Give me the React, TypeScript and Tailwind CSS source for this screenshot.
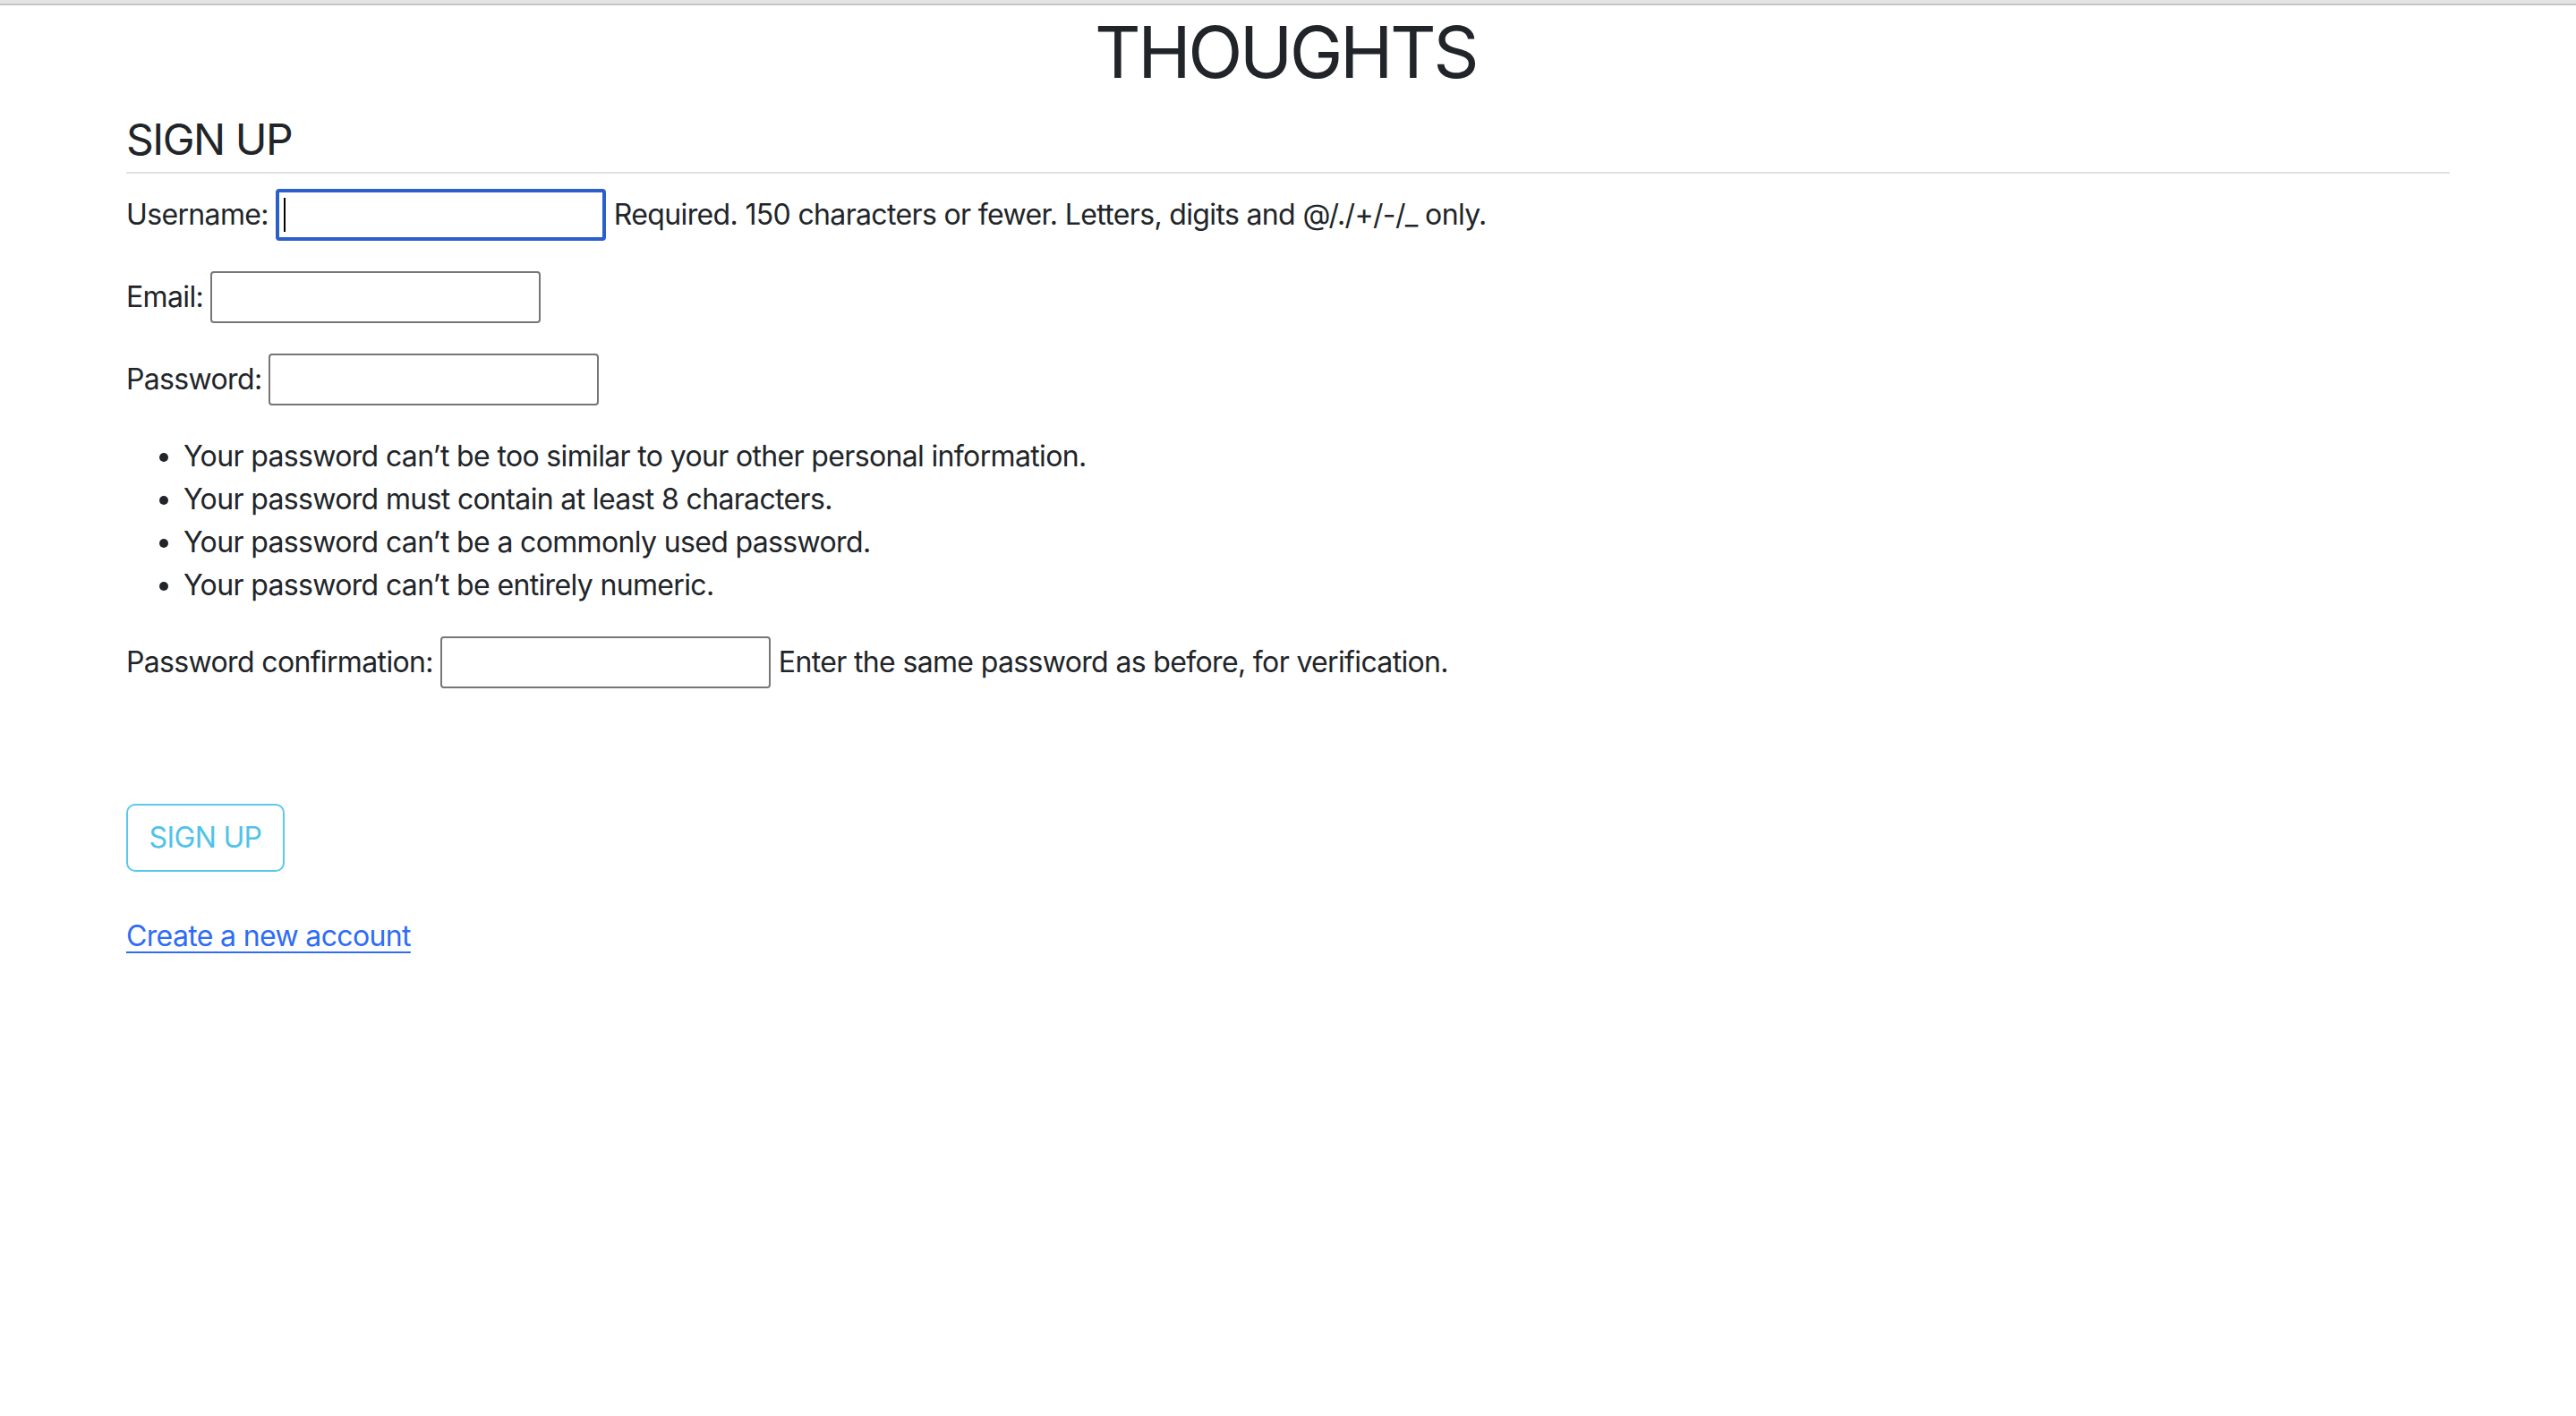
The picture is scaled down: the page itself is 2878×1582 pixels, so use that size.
const rules = [
  "Your password can’t be too similar to your other personal information.",
  "Your password must contain at least 8 characters.",
  "Your password can’t be a commonly used password.",
  "Your password can’t be entirely numeric.",
];

const Field = ({
  label,
  type,
  help,
  focused,
}: {
  label: string;
  type: string;
  help?: string;
  focused?: boolean;
}) => (
  <div className="flex items-center h-[60px] mb-[32px]">
    <label>{label}</label>
    <div
      className={`relative ml-[8px] w-[369px] h-[58px] rounded-[4px] bg-white ${
        focused
          ? "border-[4px] border-[#2b5fcb]"
          : "border-[2px] border-[#767676]"
      }`}
    >
      <input
        type={type}
        className="w-full h-full bg-transparent outline-none px-[4px]"
      />
      {focused && (
        <span className="absolute left-[5px] top-[6px] w-[2px] h-[38px] bg-black" />
      )}
    </div>
    {help && <span className="ml-[9px]">{help}</span>}
  </div>
);

export default function App() {
  return (
    <div
      className="min-h-screen bg-white text-[#212529] text-[32px] leading-[48px] tracking-[-0.65px]"
      style={{ fontFamily: "Inter, 'Noto Sans', sans-serif" }}
    >
      <div className="h-[4px] bg-[#e4e4e4]" />
      <div className="h-[2px] bg-[#c4c4c4]" />
      <h1 className="mt-[4px] pr-[6px] text-center text-[80px] leading-[96px] font-normal tracking-[-3.5px]">
        THOUGHTS
      </h1>
      <div className="px-[141px]">
        <h2 className="mt-[21px] text-[48px] leading-[58px] pb-[7px] border-b-2 border-[#dee2e6] mb-[16px] tracking-[-1.5px]">
          SIGN UP
        </h2>
        <form onSubmit={(e) => e.preventDefault()}>
          <Field
            label="Username:"
            type="text"
            focused
            help="Required. 150 characters or fewer. Letters, digits and @/./+/-/_ only."
          />
          <Field label="Email:" type="email" />
          <Field label="Password:" type="password" />
          <ul className="list-disc pl-[64px] mb-[32px]">
            {rules.map((r) => (
              <li key={r}>{r}</li>
            ))}
          </ul>
          <Field
            label="Password confirmation:"
            type="password"
            help="Enter the same password as before, for verification."
          />
          <button
            type="submit"
            className="mt-[96px] w-[177px] h-[76px] border-2 border-[#5bc8ec] text-[#4fc3ea] rounded-[10px] text-[32px]"
          >
            SIGN UP
          </button>
        </form>
        <a
          href="#"
          className="block mt-[48px] w-fit text-[#2e6cf6] underline decoration-2 underline-offset-[6px]"
        >
          Create a new account
        </a>
      </div>
    </div>
  );
}
